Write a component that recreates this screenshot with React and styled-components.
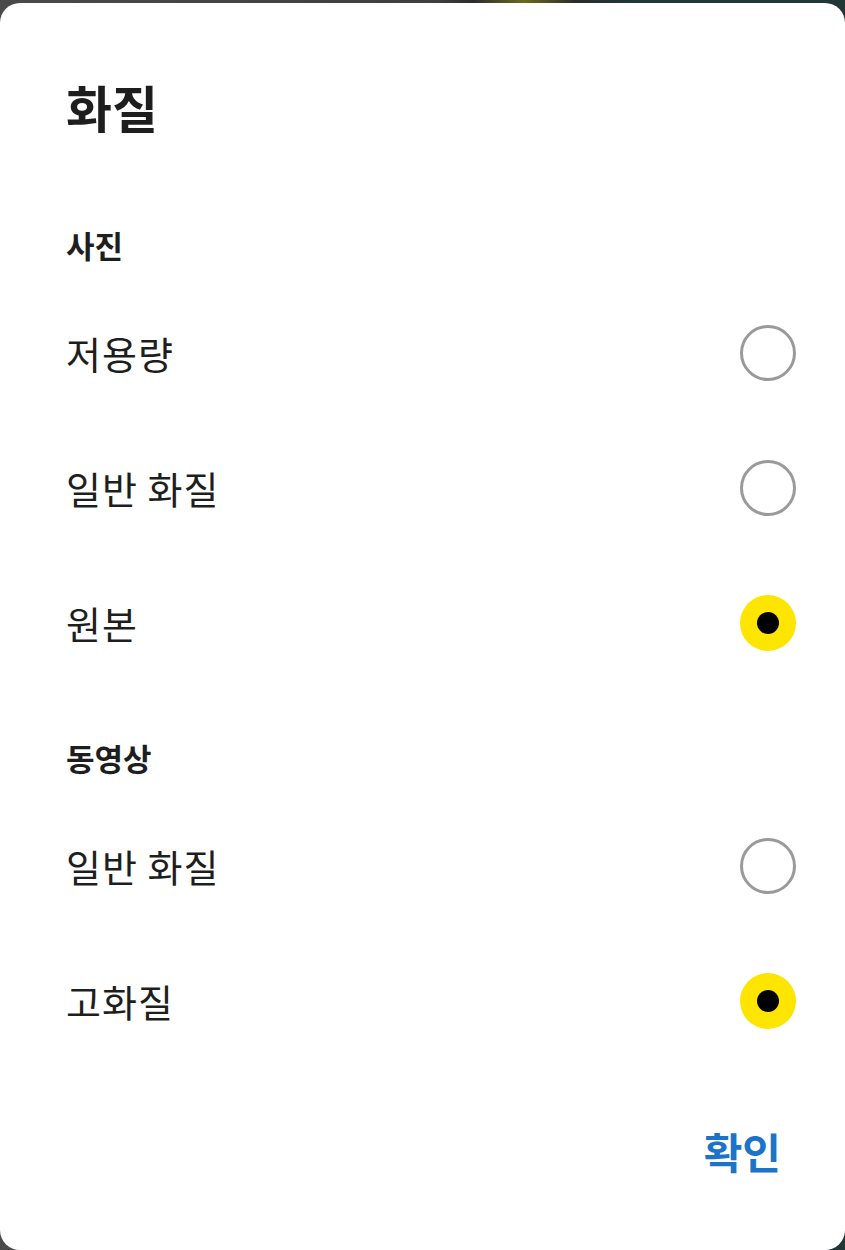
import React from "react";
import styled, { createGlobalStyle } from "styled-components";

const Global = createGlobalStyle`
  html, body { margin: 0; padding: 0; }
  body {
    background: linear-gradient(90deg, #4a4a4a 0%, #3e3e3e 52%, #2c2c2c 56%, #6a6a1e 62%, #2c2c2c 68%, #213636 74%, #213636 100%);
    font-family: "Noto Sans CJK KR", "Noto Sans", sans-serif;
    -webkit-font-smoothing: antialiased;
  }
`;

const Screen = styled.div`
  width: 845px;
  height: 1250px;
  padding-top: 3px;
  box-sizing: border-box;
  overflow: hidden;
`;

const Card = styled.div`
  background: #ffffff;
  height: 1247px;
  border-radius: 20px;
  display: flex;
  flex-direction: column;
  box-sizing: border-box;
  padding-top: 73px;
`;

const Title = styled.h1`
  margin: 0;
  padding: 0 66px;
  font-size: 50px;
  line-height: 60px;
  font-weight: 700;
  color: #1e1e1e;
  letter-spacing: 0;
`;

const SectionLabel = styled.div`
  padding: ${(p) => (p.$first ? "91px" : "50px")} 66px 22px;
  font-size: 31px;
  line-height: 36px;
  font-weight: 700;
  color: #1e1e1e;
`;

const Row = styled.div`
  height: 135px;
  display: flex;
  align-items: center;
  justify-content: space-between;
  padding: 0 49px 0 66px;
`;

const RowText = styled.span`
  font-size: 38px;
  font-weight: 400;
  color: #1e1e1e;
  line-height: 1;
  letter-spacing: 1px;
`;

const Radio = styled.span`
  width: 56px;
  height: 56px;
  border-radius: 50%;
  box-sizing: border-box;
  display: flex;
  align-items: center;
  justify-content: center;
  border: ${(p) => (p.$checked ? "none" : "3.5px solid #9a9a9a")};
  background: ${(p) => (p.$checked ? "#fee500" : "#ffffff")};
`;

const Dot = styled.span`
  width: 22px;
  height: 22px;
  border-radius: 50%;
  background: #000000;
`;

const Footer = styled.div`
  display: flex;
  justify-content: flex-end;
  padding: 58px 64px 0 0;
`;

const ConfirmButton = styled.button`
  border: none;
  background: transparent;
  padding: 0;
  font-family: inherit;
  font-size: 42px;
  line-height: 50px;
  font-weight: 700;
  color: #1b74c9;
  cursor: pointer;
`;

const sections = [
  {
    label: "사진",
    items: [
      { text: "저용량", checked: false },
      { text: "일반 화질", checked: false },
      { text: "원본", checked: true },
    ],
  },
  {
    label: "동영상",
    items: [
      { text: "일반 화질", checked: false },
      { text: "고화질", checked: true },
    ],
  },
];

export default function App() {
  return (
    <>
      <Global />
      <Screen>
        <Card>
          <Title>화질</Title>
          {sections.map((s, i) => (
            <React.Fragment key={s.label}>
              <SectionLabel $first={i === 0}>{s.label}</SectionLabel>
              {s.items.map((it, j) => (
                <Row key={j}>
                  <RowText>{it.text}</RowText>
                  <Radio $checked={it.checked}>{it.checked && <Dot />}</Radio>
                </Row>
              ))}
            </React.Fragment>
          ))}
          <Footer>
            <ConfirmButton>확인</ConfirmButton>
          </Footer>
        </Card>
      </Screen>
    </>
  );
}
